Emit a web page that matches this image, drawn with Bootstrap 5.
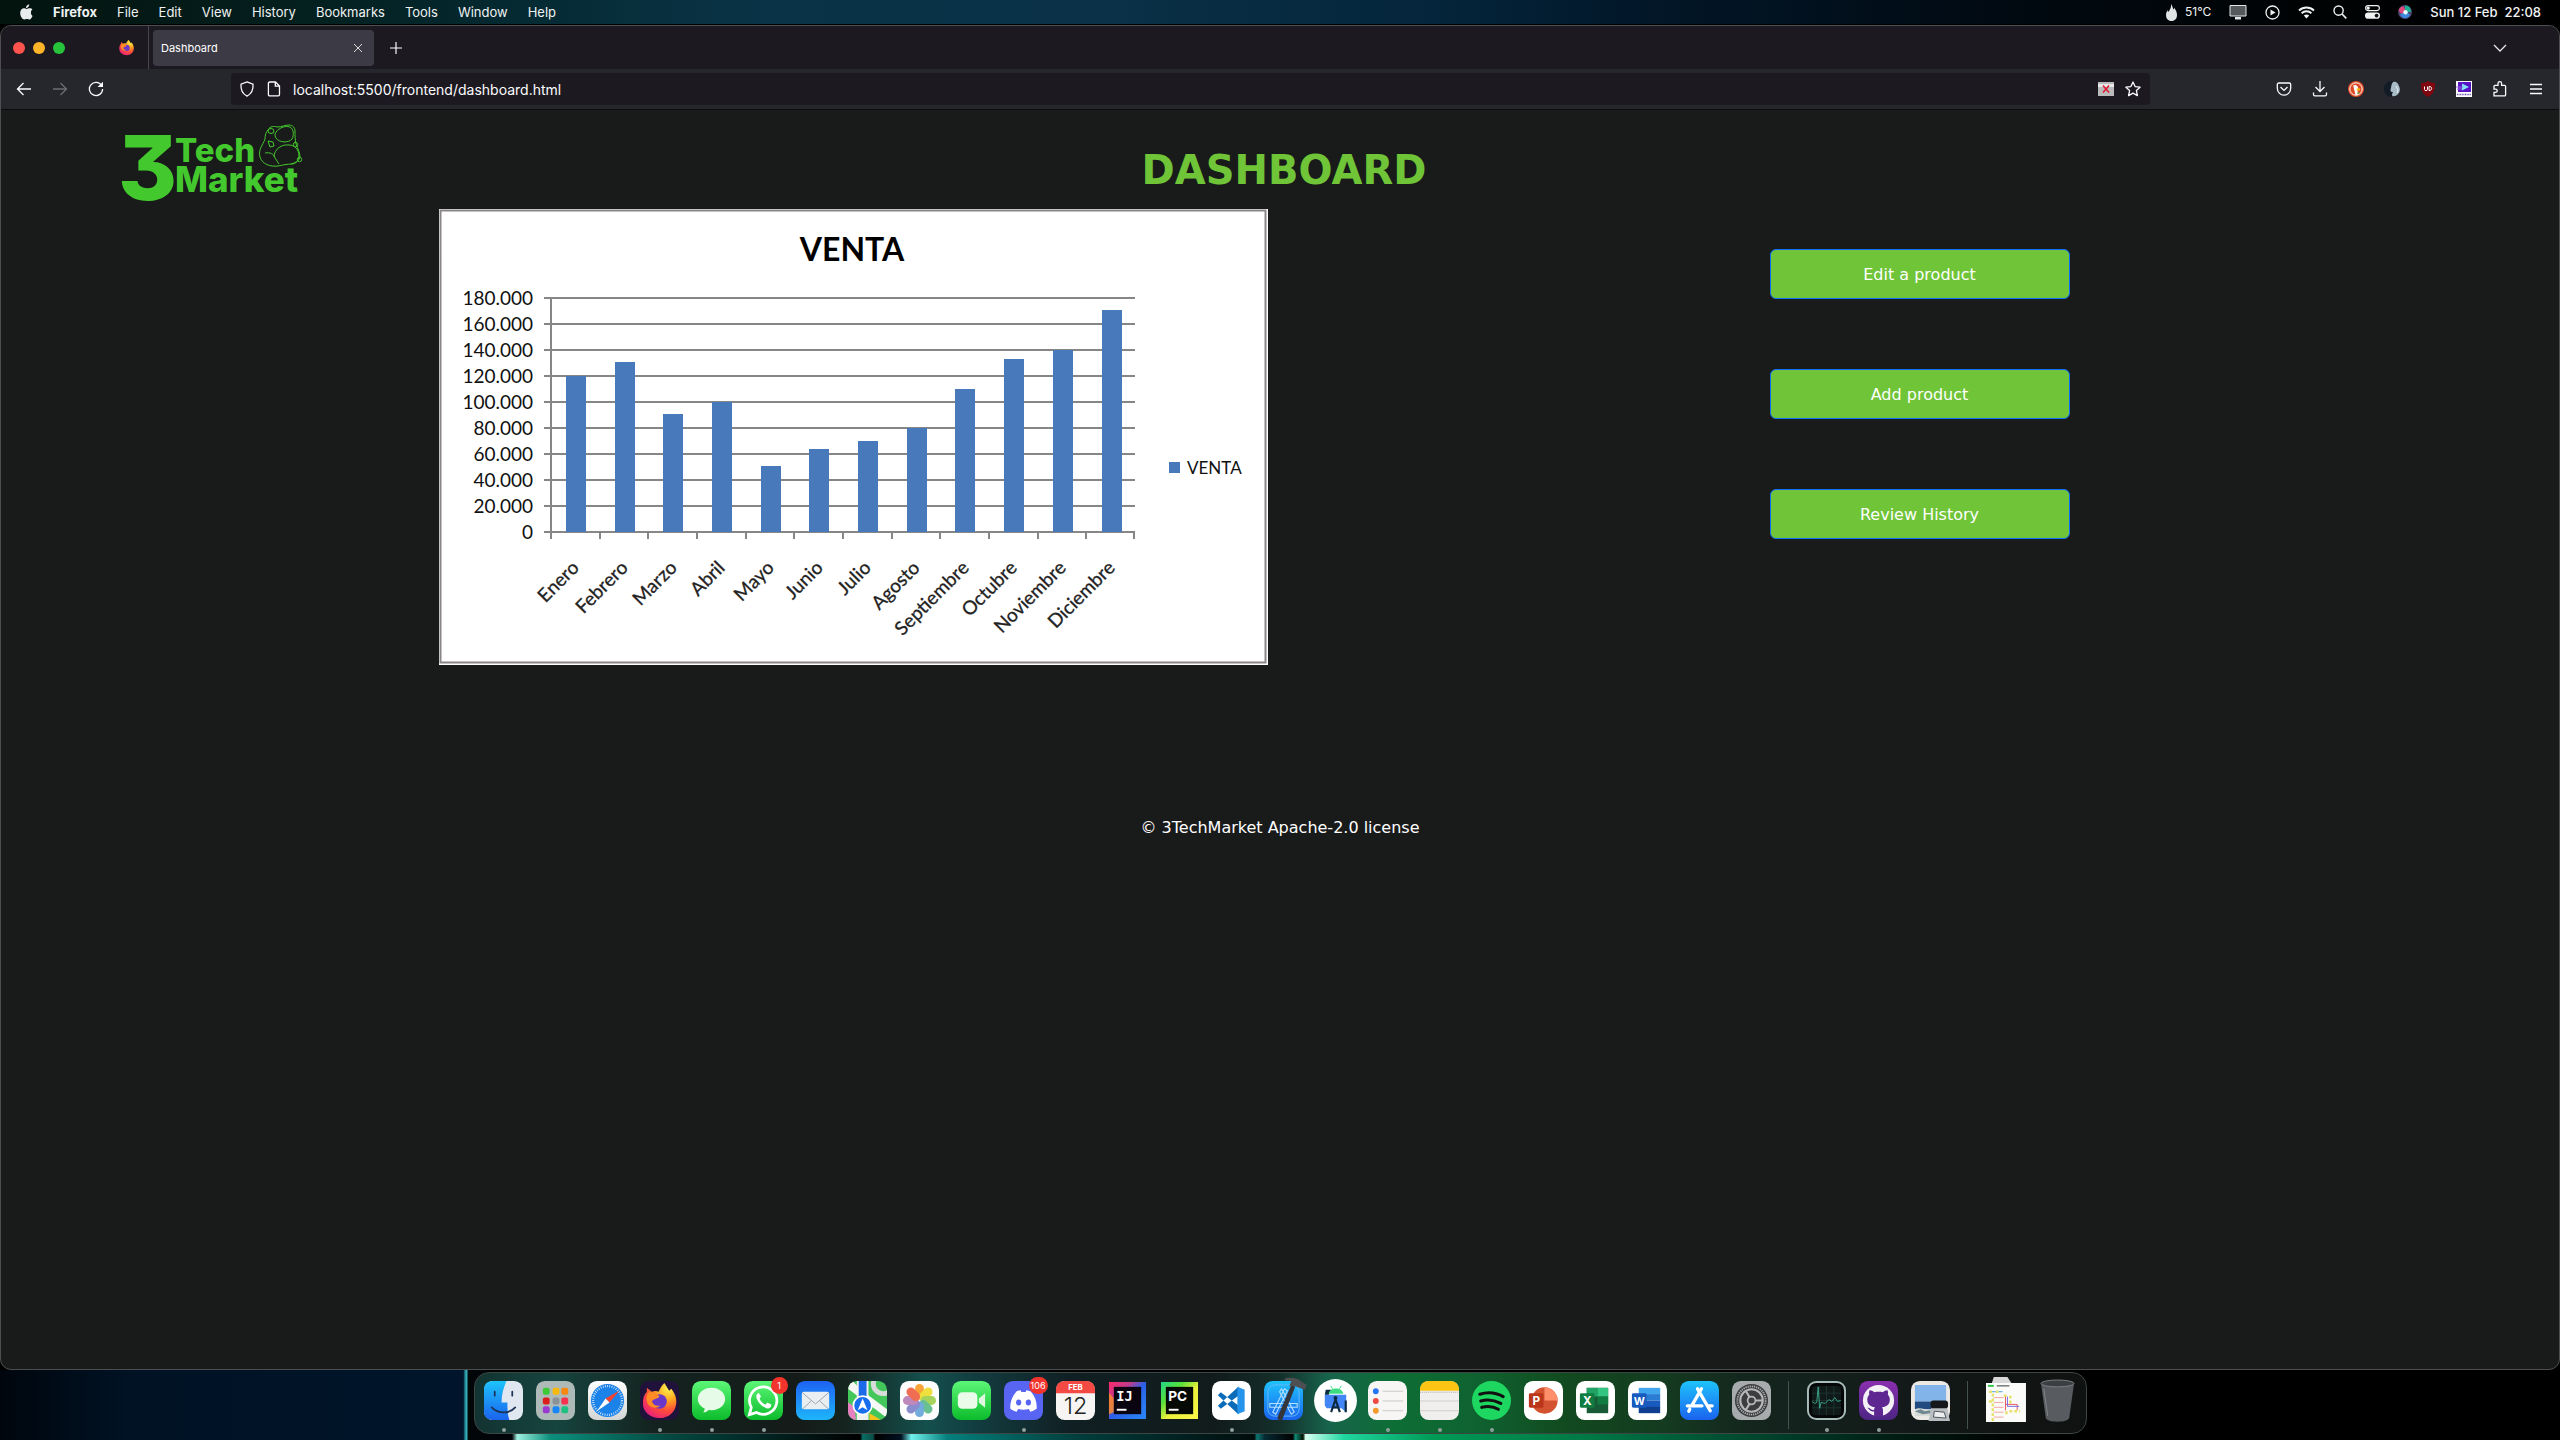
<!DOCTYPE html>
<html lang="en">
<head>
<meta charset="utf-8">
<meta name="viewport" content="width=device-width, initial-scale=1">
<title>Dashboard</title>
<link rel="stylesheet" href="https://cdn.jsdelivr.net/npm/bootstrap@5.3.0/dist/css/bootstrap.min.css">
<style>
body{min-height:100vh;background:#000;font-family:Inter,"Liberation Sans",sans-serif;color:#fff;overflow-x:hidden}
button,a{color:inherit}
svg{display:block;flex:none}
.plain{background:none;border:0;padding:0;color:inherit;display:flex;align-items:center;justify-content:center;text-decoration:none}
.menubar{height:24px;padding:0 19px 0 20px;font-size:13px;font-weight:500;line-height:24px;color:#f0f2f2;
 background:linear-gradient(90deg,#03130e 0,#04201f 12%,#052c36 22%,#0a3347 30%,#0a3147 43%,#04253b 56%,#021729 64%,#010a12 78%,#000304 90%,#000 100%)}
.menus{gap:20px;margin-left:20px}
.status{gap:18px}
.temp{font-size:12px;font-weight:400}
.win{margin-top:1px;background:#191a1a;border:1px solid #4d4e50;border-radius:11px;overflow:hidden}
.tabbar{height:43px;background:#1c1a20}
.lights{gap:8px;padding-left:12px;width:104px}
.lights i{width:12px;height:12px;border-radius:50%}
.light-close{background:#ff544d}
.light-min{background:#fdb429}
.light-zoom{background:#26c33b}
.pinned{width:44px;border-right:1px solid #47464d;align-self:stretch}
.tabitem{width:221px;height:36px;margin-left:4px;border-radius:4px;background:#3c3a44;padding:0 9px 0 8px;font-size:11px;line-height:36px}
.tools{height:41px;background:#26272c;border-bottom:1px solid #0d0d0f}
.navbtns{gap:20px;padding-left:15px;width:230px}
.urlbar{height:32px;background:#1c1a20;border-radius:4px;padding:0 9px 0 8px;gap:11px}
.urlbar input{background:none;border:0;outline:0;color:#fbfbfe;font-size:14px;padding:0;height:32px}
.exts{width:409px;padding-right:14px;gap:18px}
.exts .plain{width:18px}
.page{font-family:"DejaVu Sans",Verdana,sans-serif;font-size:16px}
.brand{padding:12px 0 0 120px;width:320px}
.brand svg{overflow:visible}
.numeral{font-feature-settings:"cv09"}
.brandrow{height:99px}
.pagetitle{font-size:40px;font-weight:700;color:#6fc437;line-height:48px;margin:36px 0 0 8px}
.actions{gap:70px;padding-top:40px}
.btn-green{--bs-btn-bg:#6fc437;--bs-btn-hover-bg:#62b02f;width:300px;height:50px;padding-top:8px}
.foot{margin-top:151px;line-height:24px}
.dockzone{height:70px;padding-top:2px;background:
 linear-gradient(#000,#000) right top/81% 60px no-repeat,
 linear-gradient(90deg,#00060d 0,#001224 5%,#00152b 18.1%,#1c6f7c 18.15%,#35b5c2 18.22%,#020609 18.3%,#010507 20%,#9ff0e0 20.2%,#0b8f7c 21.5%,#034a42 26%,#011a18 31%,#000 33.6%,#0a6f66 33.7%,#0b4f48 34.1%,#000 34.2%,#012 35.2%,#6ff0ec 35.6%,#05807c 37%,#013f3d 42%,#010c0c 49%,#0c7a73 49.1%,#062a33 49.4%,#000 50.5%,#0c8a75 50.6%,#010 50.9%,#d8fff2 51%,#1fd7a0 52.5%,#009a55 56%,#007845 62%,#004a30 68%,#001d13 74%,#000 79%,#000 100%)}
.dock{height:62px;border:1px solid #3c4644;border-radius:15px;padding:8px 9px 0 9px;gap:13px;
 background:linear-gradient(90deg,#123331 0,#16443f 5%,#14231f 11%,#141b19 20%,#15241f 23%,#14504d 28%,#123d40 31%,#101f23 37%,#111b1b 46%,#14302b 50%,#17644c 53%,#0d6e35 57%,#0f6330 62%,#12491f 68%,#143a20 74%,#14261e 79%,#131a19 88%,#101211 100%)}
.app{width:39px;height:51px;position:relative;align-items:flex-start}
.app svg{width:39px;height:39px;overflow:visible}
.running::after{content:"";position:absolute;bottom:0;left:18px;width:4px;height:4px;border-radius:50%;background:#8fa09c}
.notif{position:absolute;top:-4px;right:-5px;min-width:17px;height:17px;border-radius:9px;background:#f2342c;color:#fff;font-size:9px;line-height:17px;text-align:center;padding:0 2px}
.parting{width:10px;height:48px}
.parting::before{content:"";display:block;width:1px;height:48px;margin:0 auto;background:#44524e}
</style>
</head>
<body class="d-flex flex-column">
<header class="menubar d-flex align-items-center">
 <svg width="13" height="16" viewBox="0 0 13 16" fill="#e8ecec"><path d="M9.2.3c.1 1.200-.4 2.100-1 2.800-.6.6-1.400 1-2.200.9C5.900 3 6.400 2.100 7 1.500 7.600.9 8.500.4 9.200.3zM12.500 12c-.7 1.600-1.700 3.400-3 3.500-.9 0-1.200-.6-2.600-.6s-1.700.6-2.600.6C2 15.500.2 12 .2 8.800.2 6 2 4.300 4 4.200c1.100 0 1.900.7 2.700.7s1.900-.8 3.300-.7c.9 0 1.900.4 2.500 1.300-2.200 1.300-2 4.900 0 6.500z"/></svg>
 <nav class="menus d-flex" aria-label="Application menu">
  <button class="plain fw-bold">Firefox</button><button class="plain">File</button><button class="plain">Edit</button><button class="plain">View</button><button class="plain">History</button><button class="plain">Bookmarks</button><button class="plain">Tools</button><button class="plain">Window</button><button class="plain">Help</button>
 </nav>
 <div class="status d-flex align-items-center ms-auto">
  <span class="temp d-flex align-items-center gap-2"><svg width="11" height="17" viewBox="0 0 11 17" fill="#dfe3e3"><path d="M5 0c2 2.500 1.500 4 2.500 5.500.5-.5.6-1 .5-2 2 2.500 3 5 3 7.500 0 3.500-2 6-5.500 6S0 14.500 0 11c0-2 .8-3.500 2-5 0 1 .2 1.500.6 2C4 5.500 5.500 3 5 0z"/></svg><span>51°C</span></span>
  <svg width="18" height="15" viewBox="0 0 18 15"><path d="M1 .5h16v10.500H1z" fill="#55595b" stroke="#e4e7e7"/><path d="M6 12h6v2.500H6z" fill="#e4e7e7"/></svg>
  <svg width="15" height="15" viewBox="0 0 15 15"><circle cx="7.500" cy="7.500" r="6.500" fill="none" stroke="#f0f2f2" stroke-width="1.300"/><path d="M5.500 4.500v6l5-3z" fill="#f0f2f2"/></svg>
  <svg width="17" height="13" viewBox="0 0 17 13" fill="none" stroke="#f0f2f2" stroke-width="1.900"><path d="M1 4.500c4.300-4 10.700-4 15 0M3.600 7.200c2.800-2.600 7-2.600 9.800 0"/><path d="M5.800 9.500c1.500-1.400 3.900-1.400 5.400 0L8.500 12.500z" fill="#f0f2f2" stroke="none"/></svg>
  <svg width="14" height="14" viewBox="0 0 14 14" fill="none" stroke="#f0f2f2" stroke-width="1.400"><circle cx="5.600" cy="5.600" r="4.600"/><path d="M9 9l4.300 4.300" stroke-width="1.700"/></svg>
  <svg width="15" height="14" viewBox="0 0 15 14"><rect x=".6" y=".6" width="13.800" height="5" rx="2.500" fill="none" stroke="#f0f2f2" stroke-width="1.100"/><circle cx="3.200" cy="3.100" r="1.700" fill="#f0f2f2"/><rect x="0" y="7.500" width="15" height="6.300" rx="3.100" fill="#f0f2f2"/><circle cx="11.600" cy="10.600" r="1.900" fill="#111"/></svg>
  <svg width="14" height="14" viewBox="0 0 14 14"><circle cx="7" cy="7" r="7" fill="#4a4470"/><path d="M.8 5c2-5 7-5 6 2-2 3-5 2-6-2z" fill="#e0487c"/><path d="M7 .5c5 0 6 4 6 6.500L7 7z" fill="#1fae90"/><path d="M2 9.500c3-2 8-2 10 0-1 4-7 6-10 0z" fill="#3f86dd"/><circle cx="7.500" cy="7.200" r="2.200" fill="#eaffff"/></svg>
  <span class="text-nowrap">Sun 12 Feb&nbsp; 22:08</span>
 </div>
</header>

<div class="win flex-grow-1 d-flex flex-column">
 <div class="tabbar d-flex align-items-center">
  <div class="lights d-flex"><i class="light-close"></i><i class="light-min"></i><i class="light-zoom"></i></div>
  <button class="plain pinned" aria-label="Firefox View"><svg width="17" height="17" viewBox="0 0 40 40"><use href="#fox"/></svg></button>
  <div class="tabitem d-flex align-items-center justify-content-between"><span>Dashboard</span><button class="plain" aria-label="Close tab"><svg width="14" height="14" viewBox="0 0 14 14" stroke="#ddd" fill="none"><path d="M3 3l8 8M11 3l-8 8"/></svg></button></div>
  <button class="plain ms-3" aria-label="New tab"><svg width="12" height="12" viewBox="0 0 12 12" stroke="#fbfbfe" stroke-width="1.200"><path d="M6 0v12M0 6h12"/></svg></button>
  <button class="plain ms-auto me-5" aria-label="List tabs"><svg width="22" height="10" viewBox="0 0 22 10" fill="none" stroke="#e6e6ea" stroke-width="1.300"><path d="M5 2l6 6 6-6"/></svg></button>
 </div>
 <div class="tools d-flex align-items-center">
  <div class="navbtns d-flex">
   <button class="plain" aria-label="Back"><svg width="16" height="16" viewBox="0 0 16 16" fill="none" stroke="#fbfbfe" stroke-width="1.300"><path d="M15 8H1.500M7.500 2l-6 6 6 6"/></svg></button>
   <button class="plain" aria-label="Forward"><svg width="16" height="16" viewBox="0 0 16 16" fill="none" stroke="#6c6d72" stroke-width="1.300"><path d="M1 8h13.500M8.500 2l6 6-6 6"/></svg></button>
   <button class="plain" aria-label="Reload"><svg width="16" height="16" viewBox="0 0 16 16" fill="none" stroke="#fbfbfe" stroke-width="1.300"><path d="M13.600 4.500A6.600 6.600 0 1 0 14.600 8"/><path d="M9.500 6H15V.7z" fill="#fbfbfe" stroke="none"/></svg></button>
  </div>
  <div class="urlbar flex-grow-1 d-flex align-items-center">
   <svg width="16" height="16" viewBox="0 0 16 16" fill="none" stroke="#fbfbfe" stroke-width="1.300"><path d="M8 .9l6 2.200c.4 5-1.300 9.600-6 12-4.700-2.400-6.400-7-6-12z"/></svg>
   <svg width="16" height="16" viewBox="0 0 16 16" fill="none" stroke="#fbfbfe" stroke-width="1.300"><path d="M3.700 1H9.500l4 4v8.600c0 .8-.5 1.300-1.300 1.300H3.700c-.8 0-1.300-.5-1.300-1.300V2.300C2.400 1.500 2.900 1 3.700 1zM9.300 1v4.200h4.200"/></svg>
   <input class="flex-grow-1" type="text" value="localhost:5500/frontend/dashboard.html" aria-label="Address">
   <svg width="16" height="14" viewBox="0 0 16 14"><path fill="#b9bab9" d="M0 0h16v14H0z"/><path fill="#e8e8e8" d="M0 2h16v3H0z"/><path d="M5 3.500l6 7M11 3.500l-6 7" stroke="#e1152e" stroke-width="1.500"/></svg>
   <svg width="16" height="16" viewBox="0 0 16 16" fill="none" stroke="#fbfbfe" stroke-width="1.300" stroke-linejoin="round"><path d="M8 1l2.100 4.600 5 .6-3.700 3.400 1 5L8 12.100l-4.400 2.500 1-5L.9 6.200l5-.6z"/></svg>
  </div>
  <div class="exts d-flex justify-content-end">
   <button class="plain" aria-label="Pocket"><svg width="16" height="16" viewBox="0 0 16 16" fill="none" stroke="#fbfbfe" stroke-width="1.300"><path d="M2.800 2h10.400c.8 0 1.500.6 1.500 1.500V7c0 4-3 7.200-6.700 7.200S1.300 11 1.300 7V3.500C1.300 2.600 2 2 2.800 2z"/><path d="M4.500 6L8 9.400 11.500 6"/></svg></button>
   <button class="plain" aria-label="Downloads"><svg width="16" height="16" viewBox="0 0 16 16" fill="none" stroke="#fbfbfe" stroke-width="1.300"><path d="M8 0v10.500M3.500 6L8 10.500 12.500 6M1.500 11.500v2c0 .8.500 1.300 1.300 1.300h10.400c.8 0 1.300-.5 1.300-1.300v-2"/></svg></button>
   <button class="plain" aria-label="Privacy Essentials"><svg width="16" height="16" viewBox="0 0 16 16"><circle cx="8" cy="8" r="8" fill="#de4a26"/><circle cx="8" cy="8" r="6.200" fill="none" stroke="#fff"/><path d="M5.200 4.500c2-1.500 5 0 5 3L9.500 9l.5 5H7.500z" fill="#fff"/><path d="M8.500 7.500h4l-1 2h-2.500z" fill="#fdc00b"/><path d="M9.500 11l2.500 1-2.500 1.500z" fill="#5bb04b"/></svg></button>
   <button class="plain" aria-label="Reader theme"><svg width="16" height="16" viewBox="0 0 16 16"><circle cx="8" cy="8" r="8" fill="#111c26"/><path d="M9 1c3-1 5 1 6 4 1.500 3 1 6-1 8-1 1.500-3 2-5 2.500-1.500-1-1-3 0-4.500-2 0-3-1-2.300-3C7.500 6 7 3 9 1z" fill="#a7bac6"/><path d="M12 5l2 4-1 3" stroke="#e6eef2" fill="none"/></svg></button>
   <button class="plain" aria-label="uBlock"><svg width="16" height="16" viewBox="0 0 16 16"><path d="M8 0c2 1.500 4.500 2 7 2 0 7-1 10.500-7 14C2 12.500 1 9 1 2c2.500 0 5-.5 7-2z" fill="#800610"/><path d="M4.500 5.500v3c0 1.500 3 1.500 3 0v-3M9 5.500v4c3.500.3 3.500-4.300 0-4z" fill="none" stroke="#fff"/></svg></button>
   <button class="plain" aria-label="SpeedLab"><svg width="16" height="16" viewBox="0 0 16 16"><path fill="#fff" d="M0 0h16v16H0z"/><path fill="#5a13c4" d="M2 1h13v10H2z"/><path d="M6 2.500v7L13 6z" fill="#7fe4f5"/><path d="M0 6h7M1 8h5" stroke="#9a6be8"/><path d="M1 13.500h14" stroke="#6d55a8" stroke-dasharray="1 .6" stroke-width="1.500"/></svg></button>
   <button class="plain" aria-label="Extensions"><svg width="16" height="16" viewBox="0 0 16 16" fill="none" stroke="#fbfbfe" stroke-width="1.300"><path d="M2 14.900v-3.600h1.500c2.300 0 2.300-3.200 0-3.200H2V5.300c0-.6.300-1 1-1h3V2.500c0-2.400 3.600-2.400 3.600 0v1.800h3c.6 0 1 .4 1 1v8.600c0 .6-.4 1-1 1z"/></svg></button>
   <button class="plain" aria-label="Menu"><svg width="16" height="16" viewBox="0 0 16 16" stroke="#fbfbfe" stroke-width="1.300"><path d="M2 3.500h12M2 8h12M2 12.500h12"/></svg></button>
  </div>
 </div>

 <main class="page">
  <div class="brandrow d-flex">
   <a class="brand plain align-items-start justify-content-start" href="#" aria-label="3 Tech Market">
    <svg width="186" height="84" viewBox="0 0 186 84" fill="#43c82d" font-family="Inter" font-weight="800">
     <text class="numeral" x="-3" y="78" font-size="90">3</text>
     <text x="54" y="40" font-size="33">Tech</text>
     <text x="54" y="70" font-size="35">Market</text>
     <g fill="none" stroke="#43c82d" stroke-width="1" transform="translate(-2 1)"><path d="M149 7c2-4 6-4 9-3 5 0 8-2 12-2 4 0 6 3 6 6 0 5 0 9 1 13 2 5 4 9 4 13-1 4-5 7-8 7-5 0-9 1-14 2-8 1-16-2-18-9-2-8 3-12 5-18 0-4 1-7 3-9z"/><ellipse cx="152" cy="8" rx="3" ry="2.500"/><path d="M156 11c2-5 9-9 15-7 4 2 4 9 2 12-3 4-13 4-16-1-1-1-1-3-1-4z"/><path d="M149 18l5 1 1 4-4 1zM155 34c0-8 8-13 15-12 6 0 10 5 10 11 0 5-4 7-8 8M146 30c5-1 9 1 10 5l4 6"/><circle cx="176.500" cy="21.500" r="2.200"/><circle cx="180.500" cy="36.500" r="2.200"/></g>
    </svg>
   </a>
   <div class="flex-grow-1 d-flex justify-content-center"><h1 class="pagetitle">DASHBOARD</h1></div>
   <div class="brand"></div>
  </div>
  <div class="row g-0">
   <div class="col-6 d-flex justify-content-end pe-2">
    <svg class="me-1" width="829" height="456" viewBox="0 0 829 456" font-family="Lato,sans-serif" role="img" aria-label="VENTA chart">
     <path d="M0 0h829v456H0z" fill="#fff"/><path d="M1.500 1.500h825v452H1.500z" fill="none" stroke="#8a8686" stroke-width="2"/>
     <text x="413" y="52" font-size="32" font-weight="700" text-anchor="middle">VENTA</text>
     <path d="M105 89h591M105 115h591M105 141h591M105 167h591M105 193h591M105 219h591M105 245h591M105 271h591M105 297h591M105 323h591M112 89v241" stroke="#868686" stroke-width="2" fill="none"/>
     <path d="M161 323v7M209 323v7M258 323v7M307 323v7M355 323v7M404 323v7M453 323v7M501 323v7M550 323v7M599 323v7M647 323v7M695 323v7" stroke="#868686" stroke-width="2"/>
     <path fill="#4779bb" d="M127 167h20v156h-20zM176 153h20v170h-20zM224 205h20v118h-20zM273 193h20v130h-20zM322 257h20v66h-20zM370 240h20v83h-20zM419 232h20v91h-20zM468 219h20v104h-20zM516 180h20v143h-20zM565 150h20v173h-20zM614 141h20v182h-20zM663 101h20v222h-20zM730 253h11v11h-11z"/>
     <g font-size="19" fill="#111" text-anchor="end"><text x="94" y="96">180.000</text><text x="94" y="122">160.000</text><text x="94" y="148">140.000</text><text x="94" y="174">120.000</text><text x="94" y="200">100.000</text><text x="94" y="226">80.000</text><text x="94" y="252">60.000</text><text x="94" y="278">40.000</text><text x="94" y="304">20.000</text><text x="94" y="330">0</text></g>
     <text x="748" y="265" font-size="17" fill="#111">VENTA</text>
     <g font-size="19" fill="#222" stroke="#222" stroke-width=".3" text-anchor="end">
      <text transform="translate(141 360) rotate(-45)">Enero</text><text transform="translate(190 360) rotate(-45)">Febrero</text><text transform="translate(239 360) rotate(-45)">Marzo</text><text transform="translate(287 360) rotate(-45)">Abril</text><text transform="translate(336 360) rotate(-45)">Mayo</text><text transform="translate(385 360) rotate(-45)">Junio</text><text transform="translate(433 360) rotate(-45)">Julio</text><text transform="translate(482 360) rotate(-45)">Agosto</text><text transform="translate(531 360) rotate(-45)">Septiembre</text><text transform="translate(579 360) rotate(-45)">Octubre</text><text transform="translate(628 360) rotate(-45)">Noviembre</text><text transform="translate(677 360) rotate(-45)">Diciembre</text></g>
    </svg>
   </div>
   <div class="col-6 actions d-flex flex-column align-items-center">
    <button class="btn btn-primary btn-green">Edit a product</button>
    <button class="btn btn-primary btn-green">Add product</button>
    <button class="btn btn-primary btn-green">Review History</button>
   </div>
  </div>
  <footer class="foot text-center">© 3TechMarket Apache-2.0 license</footer>
 </main>
</div>

<div class="dockzone d-flex justify-content-center align-items-start">
 <nav class="dock d-flex" aria-label="Dock">
  <button class="plain app running" aria-label="Finder"><svg viewBox="0 0 40 40"><defs><linearGradient id="gb" x2="0" y2="1"><stop stop-color="#1ec3fc"/><stop offset="1" stop-color="#1a63ee"/></linearGradient><linearGradient id="gg" x2="0" y2="1"><stop stop-color="#5cf777"/><stop offset="1" stop-color="#0cbc2b"/></linearGradient><linearGradient id="gw" x2="0" y2="1"><stop stop-color="#fff"/><stop offset="1" stop-color="#d4d6d6"/></linearGradient></defs><rect width="40" height="40" rx="9" fill="#e1e7f0"/><path d="M9 0h14c-3 7-5 14-5 22h6c0 6 0 12 2 18H9c-6 0-9-4-9-9V9c0-5 3-9 9-9z" fill="url(#gb)"/><path d="M8 27c6 7 18 7 24 0M11 11v4M29 11v4" stroke="#1b3456" stroke-width="1.800" fill="none" stroke-linecap="round"/></svg></button>
  <button class="plain app" aria-label="Launchpad"><svg viewBox="0 0 40 40"><rect width="40" height="40" rx="9" fill="#aebab7"/><g><rect x="7" y="7" width="7" height="7" rx="2" fill="#3ccb35"/><rect x="17" y="7" width="7" height="7" rx="2" fill="#f8b90e"/><rect x="26" y="7" width="7" height="7" rx="2" fill="#f6870f"/><rect x="7" y="17" width="7" height="7" rx="2" fill="#dd1c1c"/><rect x="17" y="17" width="7" height="7" rx="2" fill="#8a9298"/><rect x="26" y="17" width="7" height="7" rx="2" fill="#f9304e"/><rect x="7" y="26" width="7" height="7" rx="2" fill="#9a39d0"/><rect x="17" y="26" width="7" height="7" rx="2" fill="#1886f7"/><rect x="26" y="26" width="7" height="7" rx="2" fill="#20bf82"/></g></svg></button>
  <button class="plain app" aria-label="Safari"><svg viewBox="0 0 40 40"><rect width="40" height="40" rx="9" fill="url(#gw)"/><circle cx="20" cy="20" r="17" fill="#1b82ea"/><circle cx="20" cy="20" r="14.800" fill="none" stroke="#d9ecfc" stroke-width="2.400" stroke-dasharray=".8 1.500"/><path d="M32 10L22 22 18 18z" fill="#f4432f"/><path d="M9 31l9-13 4 4z" fill="#fff"/></svg></button>
  <button class="plain app running" aria-label="Firefox"><svg viewBox="0 0 40 40"><defs><radialGradient id="gf" cx=".75" cy=".15" r="1"><stop stop-color="#fff44f"/><stop offset=".35" stop-color="#ffa41f"/><stop offset=".65" stop-color="#ff4a3b"/><stop offset="1" stop-color="#e01a86"/></radialGradient></defs><rect width="40" height="40" rx="9" fill="#20123a"/><g id="fox"><path d="M25 2c2 3 3 5 5 8l2-2c4 5 6 10 5 16-1 8-8 14-17 14S3 32 3 23c0-5 1-9 4-12V7l5 4c3-1 5-1 7 0 2-4 3-6 6-9z" fill="url(#gf)"/><circle cx="20" cy="21" r="7.500" fill="#6b37c8"/><path d="M8 12c5-2 9 0 12 4-2 3-6 2-8 5 2 4 5 5 9 4-4 4-12 3-14-4-1-3 0-6 1-9z" fill="#ff8a26"/></g></svg></button>
  <button class="plain app running" aria-label="Messages"><svg viewBox="0 0 40 40"><rect width="40" height="40" rx="9" fill="url(#gg)"/><path d="M20 7c8 0 14 5 14 11.500S28 30 20 30l-3-.3c-1.500 1.500-3 2.500-5.500 2.600 1-1.200 1.500-2.500 1.500-4C8.500 26 6 22.500 6 18.500 6 12 12 7 20 7z" fill="#e7fbe9"/></svg></button>
  <button class="plain app running" aria-label="WhatsApp"><svg viewBox="0 0 40 40"><rect width="40" height="40" rx="9" fill="url(#gg)"/><path d="M5.500 34.500l2-7.500a14 14 0 1 1 5.300 5.300z" fill="none" stroke="#fff" stroke-width="2.800"/><path d="M15 12c-2 1-3 3-2 6 2 5 5 8 10 10 3 1 5-1 5-4l-4-2-2 2c-3-1-5-3-6-6l1.500-2z" fill="#fff"/></svg><span class="notif">1</span></button>
  <button class="plain app" aria-label="Mail"><svg viewBox="0 0 40 40"><defs><linearGradient id="gm" x2="0" y2="1"><stop stop-color="#1d62f2"/><stop offset="1" stop-color="#1eb6fb"/></linearGradient></defs><rect width="40" height="40" rx="9" fill="url(#gm)"/><rect x="6" y="11" width="28" height="18" rx="2" fill="#e9eef1"/><path d="M6.500 12L20 23.500 33.500 12M7 28.500l9-8.500M33 28.500L24 20" stroke="#9aa5ad" fill="none"/></svg></button>
  <button class="plain app" aria-label="Maps"><svg viewBox="0 0 40 40"><clipPath id="cm"><rect width="40" height="40" rx="9"/></clipPath><g clip-path="url(#cm)"><path fill="#43c75b" d="M0 0h40v40H0z"/><path fill="#f1f2ef" d="M9 0h12v40H9z"/><path fill="#f7f7f5" d="M0 8L40 38v-9L12 8 5 0H0z"/><path fill="#1c69ea" d="M11 0h8v16h-8z"/><path fill="#e77fc0" d="M0 22c6 2 8 10 8 18H0z"/><path fill="#f8c41c" d="M22 40V33l12 7z"/><circle cx="36" cy="3" r="10" fill="none" stroke="#d7dcda" stroke-width="5"/></g><circle cx="15" cy="25" r="9.500" fill="#176ff0" stroke="#fff" stroke-width="1.800"/><path d="M15 18l5 12-5-3-5 3z" fill="#fff"/></svg></button>
  <button class="plain app" aria-label="Photos"><svg viewBox="0 0 40 40"><rect width="40" height="40" rx="9" fill="#fdfdfd"/><g opacity=".88"><rect x="15.500" y="3" width="9" height="16" rx="4.500" fill="#f79a1d"/><rect x="15.500" y="3" width="9" height="16" rx="4.500" fill="#eddb22" transform="rotate(45 20 20)"/><rect x="15.500" y="3" width="9" height="16" rx="4.500" fill="#9bce45" transform="rotate(90 20 20)"/><rect x="15.500" y="3" width="9" height="16" rx="4.500" fill="#55b884" transform="rotate(135 20 20)"/><rect x="15.500" y="3" width="9" height="16" rx="4.500" fill="#5fa1d8" transform="rotate(180 20 20)"/><rect x="15.500" y="3" width="9" height="16" rx="4.500" fill="#7b7fc9" transform="rotate(225 20 20)"/><rect x="15.500" y="3" width="9" height="16" rx="4.500" fill="#b778b5" transform="rotate(270 20 20)"/><rect x="15.500" y="3" width="9" height="16" rx="4.500" fill="#ee5a3c" transform="rotate(315 20 20)"/></g></svg></button>
  <button class="plain app" aria-label="FaceTime"><svg viewBox="0 0 40 40"><rect width="40" height="40" rx="9" fill="url(#gg)"/><rect x="6" y="11.500" width="20" height="17" rx="4.500" fill="#eafbea"/><path d="M27.500 18l6.500-5.500v15L27.500 22z" fill="#dff7df"/></svg></button>
  <button class="plain app running" aria-label="Discord"><svg viewBox="0 0 40 40"><rect width="40" height="40" rx="9" fill="#5865f2"/><path d="M13 10.500c2-.8 3.500-1 4-1l.8 1.800h4.400L23 9.500c1.500.2 3 .5 4.500 1.200C32 16 34 22 33.500 28.500c-2.500 1.700-4.500 2.500-6.500 3l-1.500-2.700c-4 1-7 1-11 0L13 31.500c-2.500-.7-4.500-1.500-6.500-3C6 22 8.500 15.500 13 10.500z" fill="#fff"/><ellipse cx="15" cy="22" rx="2.700" ry="3" fill="#5865f2"/><ellipse cx="25" cy="22" rx="2.700" ry="3" fill="#5865f2"/></svg><span class="notif">106</span></button>
  <button class="plain app" aria-label="Calendar"><svg viewBox="0 0 40 40"><rect width="40" height="40" rx="9" fill="#f6f5f3"/><path d="M0 12.500V9c0-6 4-9 9-9h22c5 0 9 3 9 9v3.500z" fill="#f44a43"/><text x="20" y="9.500" font-size="8" font-weight="700" fill="#fff" text-anchor="middle">FEB</text><text x="20" y="34" font-size="24" font-weight="300" fill="#222" text-anchor="middle">12</text></svg></button>
  <button class="plain app" aria-label="IntelliJ IDEA"><svg viewBox="0 0 40 40"><defs><linearGradient id="gi" x2="1" y2="1"><stop stop-color="#fe2a6c"/><stop offset=".3" stop-color="#c13b8c"/><stop offset=".5" stop-color="#2b5fe8"/><stop offset="1" stop-color="#2a89f5"/></linearGradient></defs><path d="M1 1h38v38H1z" fill="url(#gi)"/><path d="M1 12l5 6v14l-5 2z" fill="#f58b2c" opacity=".85"/><path d="M6 6h28v28H6z" fill="#0a0310"/><path d="M9 29.500h10" stroke="#fff" stroke-width="2"/><text x="8.500" y="20" font-size="14" font-family="DejaVu Sans Mono" font-weight="700" fill="#fff">IJ</text></svg></button>
  <button class="plain app" aria-label="PyCharm"><svg viewBox="0 0 40 40"><defs><linearGradient id="gp" x2="1" y2="1"><stop stop-color="#21d789"/><stop offset=".3" stop-color="#57e03a"/><stop offset=".55" stop-color="#e8f03a"/><stop offset="1" stop-color="#fcf84a"/></linearGradient></defs><path d="M1 1h38v38H1z" fill="url(#gp)"/><path d="M6 6h28v28H6z" fill="#050a04"/><path d="M9 29.500h10" stroke="#fff" stroke-width="2"/><text x="8.500" y="20" font-size="14" font-weight="700" fill="#fff">PC</text></svg></button>
  <button class="plain app running" aria-label="Visual Studio Code"><svg viewBox="0 0 40 40"><rect width="40" height="40" rx="9" fill="#fff"/><path d="M27 6v9L9 28.500l-3-3zM27 34v-9L9 11.500l-3 3z" fill="#0a6cb8"/><path d="M26 6l7.500 3v22L26 34z" fill="#2594ea"/></svg></button>
  <button class="plain app" aria-label="Xcode"><svg viewBox="0 0 40 40"><rect width="40" height="40" rx="9" fill="url(#gb)"/><rect x="4" y="4" width="32" height="32" rx="7" fill="none" stroke="#65b9f8"/><g fill="none" stroke="#b7e2ff" stroke-width="1.100"><path d="M9 32L21 8l3 2-12 24zM18 8l13 24-3 2L16 11zM6 23h28v4H6z"/></g><path d="M28 4l4 2-13 33c-1 3-6 1-5-2z" fill="#33353a"/><path d="M22-3c7-1 13 0 17 4l5 3-2 5-6-2-5-2-5 0 2-5-7-1z" fill="#4d4f53"/></svg></button>
  <button class="plain app" aria-label="Android Studio"><svg viewBox="0 0 40 40"><circle cx="20" cy="20" r="22" fill="#fff"/><path d="M9 14h22v18l-5-4H11l-2-3z" fill="#4285f4"/><path d="M10 9h6l-3 5h-4z" fill="#0b2a42"/><path d="M13 13c1-7 14-7 15 0z" fill="#3ddc84"/><path d="M15 5l2 3M26 5l-2 3" stroke="#3ddc84"/><path d="M15.500 32l4.500-13 4.500 13M17.500 27h5M30.500 20v12" stroke="#0b2a42" stroke-width="2.200" fill="none"/><circle cx="20" cy="17.500" r="2" fill="#0b2a42"/></svg></button>
  <button class="plain app running" aria-label="Reminders"><svg viewBox="0 0 40 40"><rect width="40" height="40" rx="9" fill="#f7f6f5"/><path d="M15 10.500h21M15 20.500h21M15 30.500h21" stroke="#c8c8c8"/><circle cx="8" cy="10.500" r="3" fill="#2476f5"/><circle cx="8" cy="20.500" r="3" fill="#ee4a42"/><circle cx="8" cy="30.500" r="3" fill="#f39a2b"/></svg></button>
  <button class="plain app running" aria-label="Notes"><svg viewBox="0 0 40 40"><rect width="40" height="40" rx="9" fill="#f1efed"/><path d="M0 10V9c0-6 4-9 9-9h22c5 0 9 3 9 9v1z" fill="#fcc514"/><path d="M0 20.500h40M0 30.500h40" stroke="#d0cecb"/><path d="M0 11.500h40" stroke="#aaa" stroke-dasharray="1 1"/></svg></button>
  <button class="plain app running" aria-label="Spotify"><svg viewBox="0 0 40 40"><circle cx="20" cy="20" r="20" fill="#1ed760"/><path d="M8 13.500c8-2.500 17-1.500 24 2.500M9 20.500c7-2 14-1 20.500 2.500M10 27c6-1.500 12-1 17 2" stroke="#111" stroke-width="3.200" stroke-linecap="round" fill="none"/></svg></button>
  <button class="plain app" aria-label="PowerPoint"><svg viewBox="0 0 40 40"><rect width="40" height="40" rx="9" fill="#fff"/><circle cx="21" cy="20" r="13.500" fill="#d35230"/><path d="M21 6.500A13.500 13.500 0 0 1 34.500 20H21z" fill="#ff8f6b"/><rect x="5" y="12.500" width="15" height="15" rx="1.500" fill="#b9361a"/><text x="12.500" y="24.500" font-size="12" font-weight="700" fill="#fff" text-anchor="middle">P</text></svg></button>
  <button class="plain app" aria-label="Excel"><svg viewBox="0 0 40 40"><rect width="40" height="40" rx="9" fill="#fff"/><path d="M11 7h22v26H11z" fill="#185c37"/><path d="M11 7h11v9H11z" fill="#21a366"/><path d="M22 7h11v9H22z" fill="#33c481"/><path d="M22 16h11v8H22z" fill="#107c41"/><rect x="4" y="12.500" width="15" height="15" rx="1.500" fill="#107c41"/><text x="11.500" y="24.500" font-size="12" font-weight="700" fill="#fff" text-anchor="middle">X</text></svg></button>
  <button class="plain app" aria-label="Word"><svg viewBox="0 0 40 40"><rect width="40" height="40" rx="9" fill="#fff"/><path d="M11 7h22v7H11z" fill="#41a5ee"/><path d="M11 13.500h22V20H11z" fill="#2b7cd3"/><path d="M11 20h22v7H11z" fill="#185abd"/><path d="M11 26.500h22V33H11z" fill="#103f91"/><rect x="4" y="12.500" width="15" height="15" rx="1.500" fill="#185abd"/><text x="11.500" y="24.500" font-size="11" font-weight="700" fill="#fff" text-anchor="middle">W</text></svg></button>
  <button class="plain app" aria-label="App Store"><svg viewBox="0 0 40 40"><rect width="40" height="40" rx="9" fill="url(#gb)"/><g stroke="#fff" stroke-width="3.400" stroke-linecap="round"><path d="M22 8L12 25.500M18 8l13 22.500M7.500 25.500h15M29 25.500h4M10 29l-1 2"/></g></svg></button>
  <button class="plain app" aria-label="System Settings"><svg viewBox="0 0 40 40"><rect width="40" height="40" rx="9" fill="#a7abad"/><circle cx="20" cy="20" r="17" fill="#3c3d3e"/><circle cx="20" cy="20" r="14.500" fill="none" stroke="#a9abac" stroke-width="2" stroke-dasharray="1.300 .9"/><circle cx="20" cy="20" r="11.500" fill="none" stroke="#b5b7b8" stroke-width="2.200"/><circle cx="20" cy="20" r="4" fill="none" stroke="#b5b7b8" stroke-width="1.800"/><path d="M24 20h8M18 16.500L14 10M18 23.500L14 30" stroke="#b5b7b8" stroke-width="2.200"/></svg></button>
  <div class="parting"></div>
  <button class="plain app running" aria-label="Activity Monitor"><svg viewBox="0 0 40 40"><rect x="1" y="1" width="38" height="38" rx="8.500" fill="#050606" stroke="#a9bdbb" stroke-width="2"/><rect x="5" y="5" width="30" height="30" rx="4" fill="#101a19"/><path d="M5 12.500h30M5 20h30M5 27.500h30M12.500 5v30M20 5v30M27.500 5v30" stroke="#21403a" stroke-width=".7"/><path d="M5 21l3 2 2-1 1.500-16 1.500 22 1.500-6 4 1 4-4 3 2 3-4 3 4 3-1" stroke="#3fae92" stroke-width=".9" fill="none"/></svg></button>
  <button class="plain app running" aria-label="GitHub Desktop"><svg viewBox="0 0 40 40"><defs><linearGradient id="gh" x2="0" y2="1"><stop stop-color="#8a2fae"/><stop offset="1" stop-color="#4c2583"/></linearGradient></defs><rect width="40" height="40" rx="9" fill="url(#gh)"/><circle cx="20" cy="20" r="16" fill="#f4f1f6"/><path d="M15.500 36v-5c-4 1-5-2-7-3.500 3-.5 3 3 7 2 .2-1.300.5-2 1-2.500-5-.7-8-3-8-8 0-2 .7-3.500 2-5-.4-1.500-.3-3 .3-4.500 2 0 3.500 1 5 2 2.500-.6 6-.6 8.500 0 1.500-1 3-2 5-2 .6 1.500.7 3 .3 4.500 1.300 1.500 2 3 2 5 0 5-3 7.300-8 8 .7.800 1 2 1 3.500V36z" fill="#5d2690"/></svg></button>
  <button class="plain app" aria-label="Preview"><svg viewBox="0 0 40 40"><rect width="40" height="40" rx="9" fill="#ece9e5"/><path d="M4 4h32v17H4z" fill="#82b4ea"/><path d="M4 21h32v8H4z" fill="#214a80"/><path d="M4 29c6-3 12 2 18 0l14 2v5H4z" fill="#d8dcd9"/><path d="M4 31l6-2 4 2 6-1v3l-8 1z" fill="#6f8892"/><path d="M21 27h16l3 14H18z" fill="#b9bec2"/><path d="M24 31l10 1 2 6-13-1z" fill="#eceeef" stroke="#50555a"/><rect x="20" y="20" width="18" height="8" rx="3" fill="#15171a"/></svg></button>
  <div class="parting"></div>
  <button class="plain app" aria-label="Documents"><svg viewBox="0 0 40 40"><path d="M8-4h14l4 6H6z" fill="#d8d8d8"/><path d="M0 2h41v40H0z" fill="#fbfbfa"/><path d="M2 5h6" stroke="#31c94b" stroke-width="2"/><path d="M11 5h13" stroke="#333"/><path d="M8 17h10M8 22h10M8 27h10M8 32h10M8 37h10" stroke="#f3a6a0"/><path d="M20 15v15M20 24h12v6" fill="none" stroke="#e8565f"/><path d="M22 16v10h12" fill="none" stroke="#7468e4"/><path d="M3 11h14" fill="none" stroke="#4ea3e8"/><path d="M7 13v28M3 11h4M10 11h5M3 21h4M18 15h4M25 15v8M21 31v4M24 31h11" stroke="#e7e26a" stroke-width="2.500" fill="none" stroke-dasharray="3 2"/></svg></button>
  <button class="plain app" aria-label="Trash"><svg viewBox="0 0 40 40"><path d="M3 2h34l-5 36c-1 5-23 5-24 0z" fill="#5e6267" opacity=".92"/><ellipse cx="20" cy="2.500" rx="17" ry="3.500" fill="#3b3f42" stroke="#797e82"/><path d="M6 8l4 28" stroke="#8b9094" stroke-width=".8"/></svg></button>
 </nav>
</div>
<script src="https://cdn.jsdelivr.net/npm/bootstrap@5.3.0/dist/js/bootstrap.bundle.min.js"></script>
</body>
</html>
